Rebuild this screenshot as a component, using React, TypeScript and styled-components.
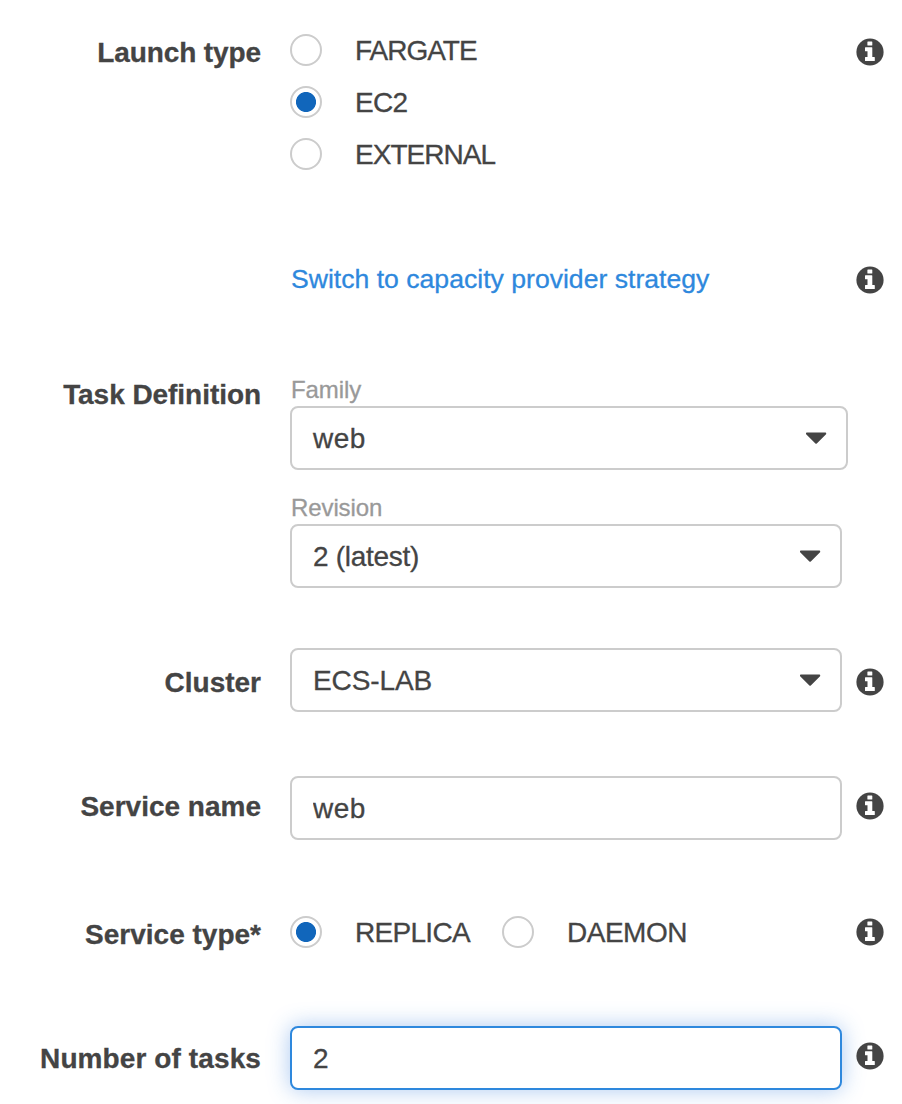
import React from "react";
import styled, { createGlobalStyle } from "styled-components";

const GlobalStyle = createGlobalStyle`
  *, *::before, *::after { box-sizing: border-box; }
  body {
    margin: 0;
    background: #fff;
    color: #444;
    font-family: "Liberation Sans", Arial, Helvetica, sans-serif;
    font-size: 28px;
    line-height: 32px;
    -webkit-text-stroke: 0.3px;
  }
`;

const Form = styled.form`
  width: 902px;
  height: 1104px;
  overflow: hidden;
  padding-top: 24px;
  display: flex;
  flex-direction: column;
`;

const FormRow = styled.div<{ $height: number }>`
  flex: none;
  display: grid;
  grid-template-columns: 261px 552px 28px;
  grid-template-rows: 100%;
  column-gap: 29px;
  height: ${(p) => p.$height}px;
`;

const RowLabel = styled.div<{ $top: number; $spacing?: number }>`
  padding-top: ${(p) => p.$top}px;
  font-weight: 700;
  text-align: right;
  white-space: nowrap;
  letter-spacing: ${(p) => p.$spacing ?? 0}px;
`;

const Controls = styled.div`
  display: flex;
  flex-direction: column;
  align-items: flex-start;
`;

const RadioGroup = styled.div<{ $inline?: boolean }>`
  display: flex;
  flex-direction: ${(p) => (p.$inline ? "row" : "column")};
`;

const RadioOption = styled.label<{ $width?: number }>`
  display: flex;
  align-items: center;
  height: 52px;
  width: ${(p) => (p.$width ? `${p.$width}px` : "auto")};
`;

const RadioInput = styled.input`
  appearance: none;
  flex: none;
  width: 32px;
  height: 32px;
  margin: 0 33px 0 0;
  border: 2px solid #ccc;
  border-radius: 50%;
  background: #fff;
  &:checked {
    background: radial-gradient(circle closest-side, #1166bb 9.6px, #fff 10.4px);
    background-origin: border-box;
  }
`;

const Text = styled.span<{ $spacing?: number }>`
  padding-top: 1px;
  white-space: nowrap;
  letter-spacing: ${(p) => p.$spacing ?? 0}px;
`;

const Link = styled.a`
  padding-left: 1px;
  color: #2e88dd;
  font-size: 26.6px;
  line-height: 30px;
  white-space: nowrap;
`;

const FieldCaption = styled.div<{ $spacing?: number }>`
  height: 30px;
  padding-left: 1px;
  color: #999;
  font-size: 24px;
  line-height: 28px;
  letter-spacing: ${(p) => p.$spacing ?? 0}px;
`;

const Field = styled.div`
  & + & {
    margin-top: 24px;
  }
`;

const SelectBox = styled.div<{ $wide?: boolean }>`
  display: flex;
  align-items: center;
  justify-content: space-between;
  width: ${(p) => (p.$wide ? 558 : 552)}px;
  height: 64px;
  padding: 0 19px 0 21px;
  border: 2px solid #ccc;
  border-radius: 8px;
  background: #fff;
`;

const TextInput = styled.input<{ $active?: boolean }>`
  width: 552px;
  height: 64px;
  padding: 1px 20px 0 21px;
  border: 2px solid ${(p) => (p.$active ? "#2e88dd" : "#ccc")};
  border-radius: 8px;
  outline: none;
  background: #fff;
  color: #444;
  font: inherit;
  letter-spacing: 0.5px;
  -webkit-text-stroke: 0.3px;
  box-shadow: ${(p) => (p.$active ? "0 0 22px rgba(46, 120, 221, 0.4)" : "none")};
`;

const InfoSvg = styled.svg<{ $top: number }>`
  display: block;
  width: 28px;
  height: 28px;
  margin-top: ${(p) => p.$top}px;
  margin-left: -15px;
`;

function InfoIcon({ top }: { top: number }) {
  return (
    <InfoSvg $top={top} viewBox="0 0 28 28" aria-label="Information">
      <circle cx="14" cy="14" r="13.6" fill="#444" />
      <path
        d="M11.9 3.4h3.9q.5 0 .5.5v3.1q0 .5-.5.5h-3.9q-.5 0-.5-.5v-3.1q0-.5.5-.5zM9.5 9.2h6.3q.5 0 .5.5v9.2h2q.5 0 .5.5v3.2q0 .5-.5.5h-8.8q-.5 0-.5-.5v-3.2q0-.5.5-.5h2v-5.7h-2q-.5 0-.5-.5v-3q0-.5.5-.5z"
        fill="#fff"
      />
    </InfoSvg>
  );
}

function Caret() {
  return (
    <svg width="21" height="12" viewBox="0 0 21 12" fill="#444">
      <path d="M.8.4h18.6q.8 0 .8.8v.6q0 .4-.4.8l-9 8.8q-.7.7-1.4 0l-9-8.8q-.4-.4-.4-.8v-.6q0-.8.8-.8z" />
    </svg>
  );
}

interface OptionProps {
  name: string;
  text: string;
  spacing?: number;
  checked?: boolean;
  width?: number;
}

function Option({ name, text, spacing, checked, width }: OptionProps) {
  return (
    <RadioOption $width={width}>
      <RadioInput type="radio" name={name} defaultChecked={checked} />
      <Text $spacing={spacing}>{text}</Text>
    </RadioOption>
  );
}

interface SelectProps {
  value: string;
  spacing?: number;
  wide?: boolean;
}

function Select({ value, spacing, wide }: SelectProps) {
  return (
    <SelectBox $wide={wide}>
      <Text $spacing={spacing}>{value}</Text>
      <Caret />
    </SelectBox>
  );
}

export default function App() {
  return (
    <>
      <GlobalStyle />
      <Form>
        <FormRow $height={240}>
          <RowLabel $top={13} $spacing={-0.1}>Launch type</RowLabel>
          <RadioGroup>
            <Option name="launch" text="FARGATE" spacing={-1} />
            <Option name="launch" text="EC2" spacing={-0.7} checked />
            <Option name="launch" text="EXTERNAL" spacing={-0.95} />
          </RadioGroup>
          <InfoIcon top={14} />
        </FormRow>
        <FormRow $height={112}>
          <RowLabel $top={0} />
          <Controls>
            <Link>Switch to capacity provider strategy</Link>
          </Controls>
          <InfoIcon top={2} />
        </FormRow>
        <FormRow $height={272}>
          <RowLabel $top={3} $spacing={-0.05}>Task Definition</RowLabel>
          <Controls>
            <Field>
              <FieldCaption $spacing={-0.1}>Family</FieldCaption>
              <Select value="web" spacing={0.5} wide />
            </Field>
            <Field>
              <FieldCaption $spacing={-0.1}>Revision</FieldCaption>
              <Select value="2 (latest)" spacing={-0.3} />
            </Field>
          </Controls>
        </FormRow>
        <FormRow $height={128}>
          <RowLabel $top={19}>Cluster</RowLabel>
          <Controls>
            <Select value="ECS-LAB" spacing={-0.1} />
          </Controls>
          <InfoIcon top={20} />
        </FormRow>
        <FormRow $height={130}>
          <RowLabel $top={15}>Service name</RowLabel>
          <Controls>
            <TextInput defaultValue="web" />
          </Controls>
          <InfoIcon top={16} />
        </FormRow>
        <FormRow $height={120}>
          <RowLabel $top={13}>Service type*</RowLabel>
          <RadioGroup $inline>
            <Option name="service" text="REPLICA" spacing={-0.7} checked width={212} />
            <Option name="service" text="DAEMON" spacing={-0.5} />
          </RadioGroup>
          <InfoIcon top={12} />
        </FormRow>
        <FormRow $height={78}>
          <RowLabel $top={17} $spacing={0.1}>Number of tasks</RowLabel>
          <Controls>
            <TextInput $active defaultValue="2" />
          </Controls>
          <InfoIcon top={16} />
        </FormRow>
      </Form>
    </>
  );
}
